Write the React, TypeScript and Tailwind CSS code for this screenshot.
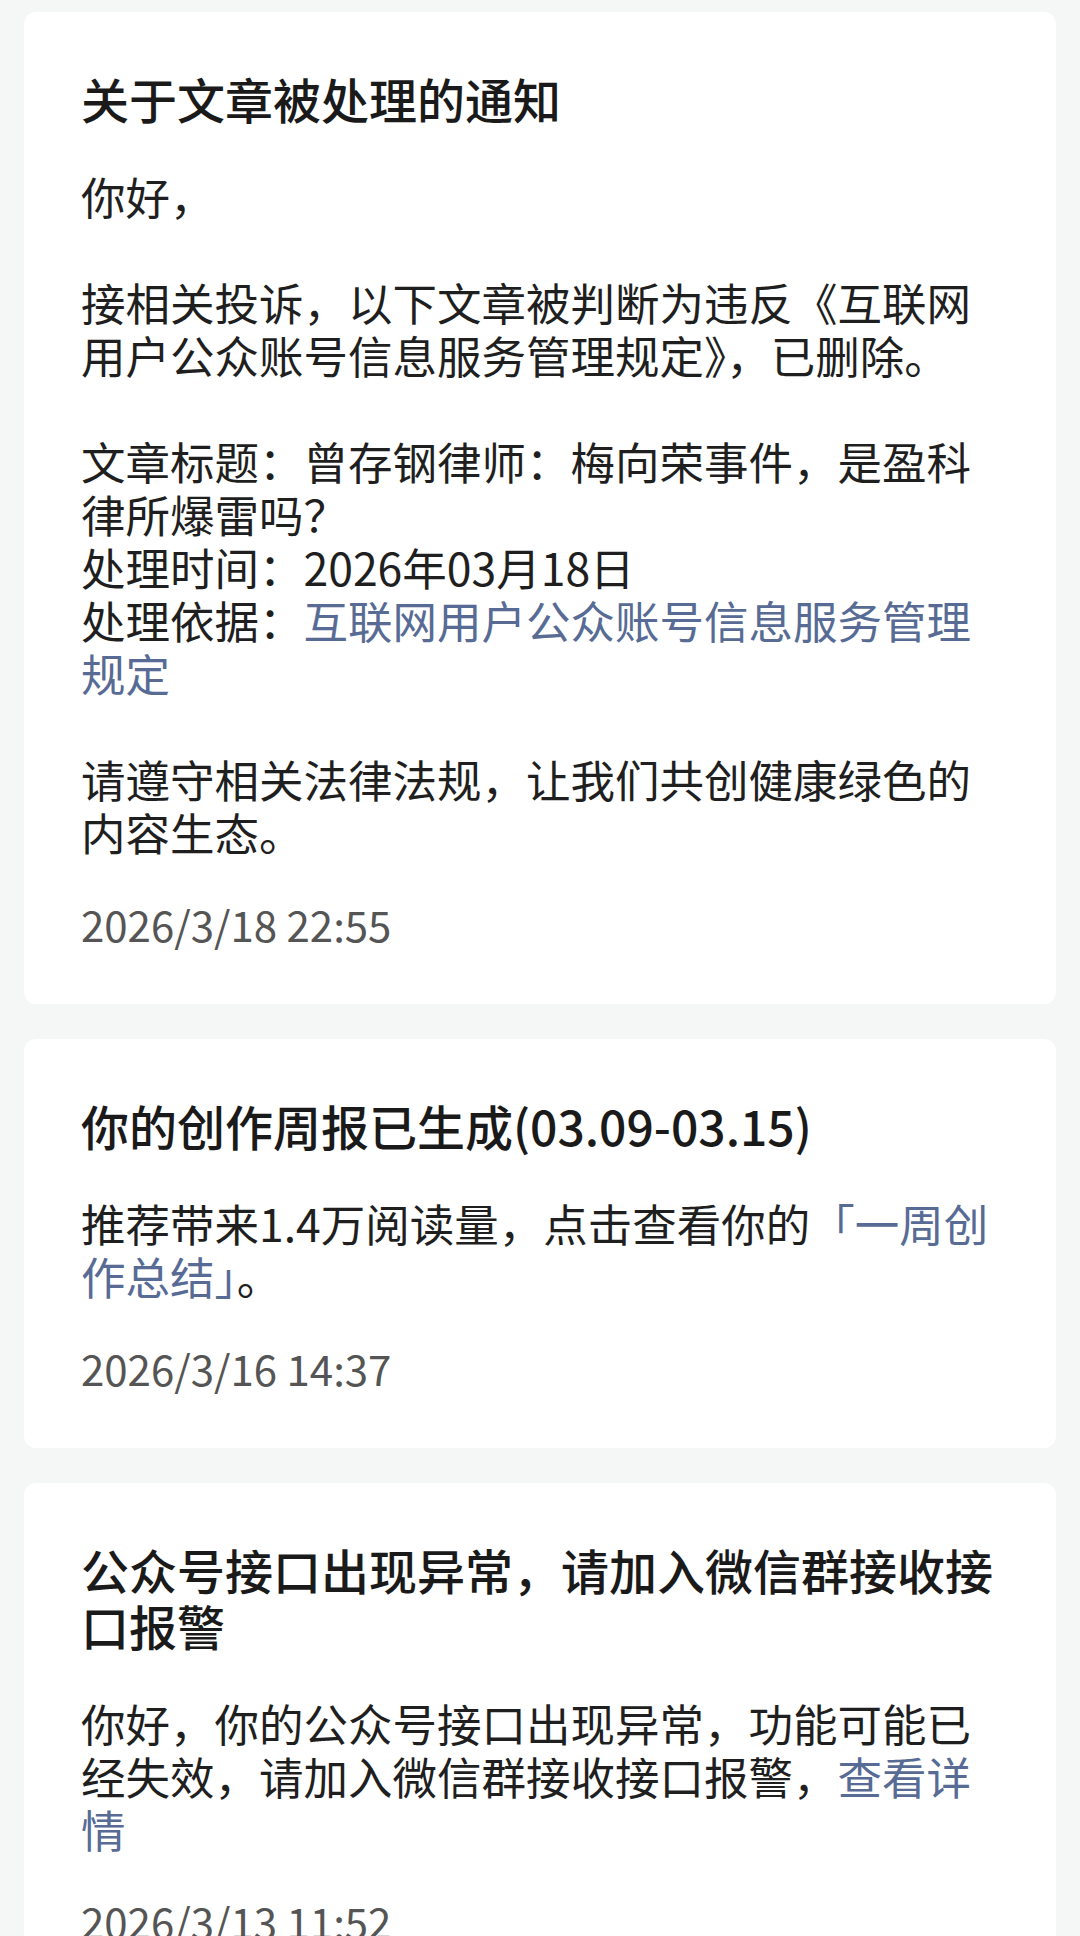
import React from 'react';

const font = { fontFamily: '"Noto Sans CJK SC", "Noto Sans", sans-serif' };

type Notice = {
  title: string;
  body: React.ReactNode;
  time: string;
};

const Link = ({ children }: { children: React.ReactNode }) => (
  <span className="text-[#576b95]">{children}</span>
);

const notices: Notice[] = [
  {
    title: '关于文章被处理的通知',
    body: (
      <>
        {'你好，\n\n接相关投诉，以下文章被判断为违反《互联网用户公众账号信息服务管理规定》，已删除。\n\n文章标题：曾存钢律师：梅向荣事件，是盈科律所爆雷吗？\n处理时间：2026年03月18日\n处理依据：'}
        <Link>互联网用户公众账号信息服务管理规定</Link>
        {'\n\n请遵守相关法律法规，让我们共创健康绿色的内容生态。'}
      </>
    ),
    time: '2026/3/18 22:55',
  },
  {
    title: '你的创作周报已生成(03.09-03.15)',
    body: (
      <>
        推荐带来1.4万阅读量，点击查看你的<Link>「一周创作总结」</Link>。
      </>
    ),
    time: '2026/3/16 14:37',
  },
  {
    title: '公众号接口出现异常，请加入微信群接收接口报警',
    body: (
      <>
        你好，你的公众号接口出现异常，功能可能已经失效，请加入微信群接收接口报警，<Link>查看详情</Link>
      </>
    ),
    time: '2026/3/13 11:52',
  },
];

function NoticeCard({ notice }: { notice: Notice }) {
  return (
    <div className="bg-white rounded-[12px] pl-[57px] pr-[56px] pt-[58px] pb-[55px]">
      <h2 className="text-[48px] leading-[56px] font-medium text-[#1a1a1a]">{notice.title}</h2>
      <p className="mt-[43px] text-[44.5px] leading-[53px] text-[#1f1f1f] whitespace-pre-wrap">
        {notice.body}
      </p>
      <div className="mt-[41px] text-[42px] leading-[50px] text-[#555555]">{notice.time}</div>
    </div>
  );
}

export default function App() {
  return (
    <div className="h-[1936px] w-[1080px] overflow-hidden bg-[#f5f6f6]" style={font}>
      <div className="flex flex-col gap-[35px] px-[24px] pt-[12px]">
        {notices.map((n) => (
          <NoticeCard key={n.time} notice={n} />
        ))}
      </div>
    </div>
  );
}
